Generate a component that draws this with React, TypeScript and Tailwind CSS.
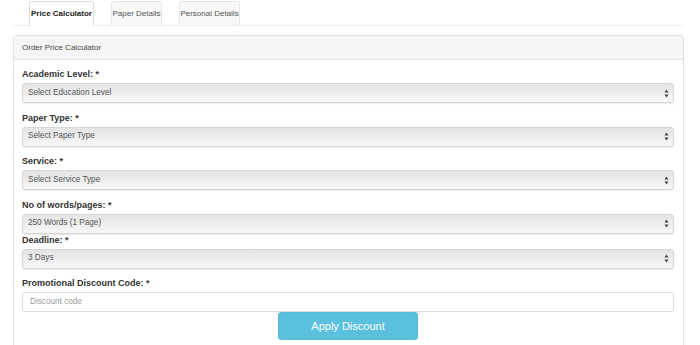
const tabs = [
  { name: "Price Calculator", width: "w-[65px]", active: true },
  { name: "Paper Details", width: "w-[51px]", active: false },
  { name: "Personal Details", width: "w-[61px]", active: false },
];

const fields = [
  { label: "Academic Level: *", value: "Select Education Level", mb: "mb-[8.5px]" },
  { label: "Paper Type: *", value: "Select Paper Type", mb: "mb-[8.5px]" },
  { label: "Service: *", value: "Select Service Type", mb: "mb-[8.5px]" },
  { label: "No of words/pages: *", value: "250 Words (1 Page)", mb: "mb-0" },
  { label: "Deadline: *", value: "3 Days", mb: "mb-[8.5px]" },
];

const Arrows = () => (
  <svg width="5" height="9" viewBox="0 0 5 9" className="shrink-0">
    <path d="M2.5 0.5 L4.5 3.5 H0.5 Z" fill="#444" />
    <path d="M2.5 8.5 L4.5 5.5 H0.5 Z" fill="#444" />
  </svg>
);

const SelectBox = ({ value }: { value: string }) => (
  <div className="h-[20px] flex items-center justify-between pl-[5px] pr-[4px] rounded-[3px] border border-[#d6d6d6] bg-gradient-to-b from-[#e4e4e4] to-[#f7f7f7] shadow-[0_1px_1px_rgba(0,0,0,0.08)] text-[8.2px] text-[#555]">
    <span>{value}</span>
    <Arrows />
  </div>
);

const App = () => {
  return (
    <div className="w-[700px] h-[345px] overflow-hidden bg-white font-['Liberation_Sans',Arial,sans-serif] text-[#333]">
      <div className="mx-[13px] w-[671px] pt-[1px]">
        <ul className="flex gap-[17px] pl-[16px] border-b border-[#eeeeee] h-[25px]">
          {tabs.map((tab) => (
            <li
              key={tab.name}
              className={`${tab.width} h-[24px] flex items-center justify-center rounded-t-[3px] border border-b-0 text-[8px] ${
                tab.active
                  ? "bg-white border-[#dddddd] font-bold text-[#222] h-[25px]"
                  : "bg-[#f8f8f8] border-[#e6e6e6] text-[#555]"
              }`}
            >
              {tab.name}
            </li>
          ))}
        </ul>
        <div className="mt-[9px] border border-[#e4e4e4] rounded-t-[3px] h-[320px]">
          <div className="h-[24px] flex items-center pl-[8px] bg-[#f5f5f5] border-b border-[#e4e4e4] text-[8px] text-[#444]">
            Order Price Calculator
          </div>
          <div className="pl-[8px] pr-[9px] pt-[8px]">
            {fields.map((f) => (
              <div key={f.label} className={f.mb}>
                <label className="block h-[12px] leading-[12px] mb-[3px] text-[9px] font-bold text-[#333]">
                  {f.label}
                </label>
                <SelectBox value={f.value} />
              </div>
            ))}
            <div>
              <label className="block h-[12px] leading-[12px] mb-[3px] text-[9px] font-bold text-[#333]">
                Promotional Discount Code: *
              </label>
              <div className="h-[20px] flex items-center pl-[7px] rounded-[3px] border border-[#dcdcdc] bg-white text-[8.2px] text-[#999]">
                Discount code
              </div>
            </div>
            <div className="flex justify-center">
              <button className="w-[140px] h-[28px] rounded-[3px] bg-[#5bc0de] border border-[#58b8d6] text-white text-[11px]">
                Apply Discount
              </button>
            </div>
          </div>
        </div>
      </div>
    </div>
  );
};

export default App;
